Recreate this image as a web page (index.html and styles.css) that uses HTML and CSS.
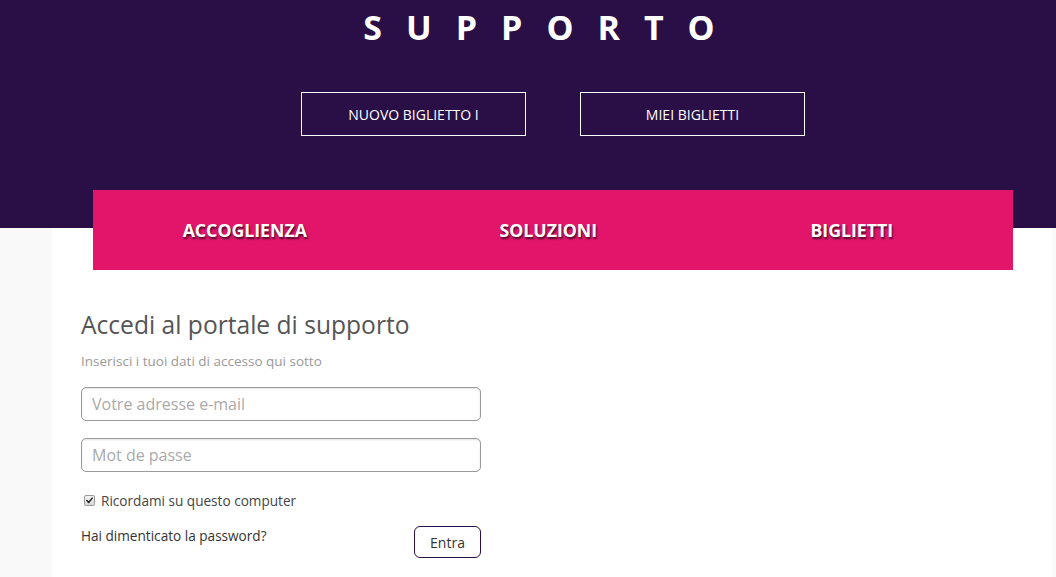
FILE: index.html
```html
<!DOCTYPE html>
<html lang="it">
<head>
<meta charset="utf-8">
<title>Supporto</title>
<link rel="stylesheet" href="styles.css">
</head>
<body>
<header class="hero">
  <h1 class="hero-title">SUPPORTO</h1>
  <div class="hero-actions">
    <a class="hero-btn" href="#">NUOVO BIGLIETTO I</a>
    <a class="hero-btn" href="#">MIEI BIGLIETTI</a>
  </div>
</header>
<main class="page">
  <nav class="tabs">
    <a class="tab" href="#">ACCOGLIENZA</a>
    <a class="tab" href="#">SOLUZIONI</a>
    <a class="tab" href="#">BIGLIETTI</a>
  </nav>
  <form class="login">
    <h2 class="login-title">Accedi al portale di supporto</h2>
    <p class="login-sub">Inserisci i tuoi dati di accesso qui sotto</p>
    <input class="field" type="text" placeholder="Votre adresse e-mail">
    <input class="field" type="password" placeholder="Mot de passe">
    <label class="remember">
      <input class="check" type="checkbox" checked>
      <span class="box"><svg viewBox="0 0 11 11" width="11" height="11"><path d="M2.3 5.6 L4.5 8 L8.8 2.6" fill="none" stroke="#222" stroke-width="1.8" stroke-linecap="round" stroke-linejoin="round"/></svg></span>
      <span>Ricordami su questo computer</span>
    </label>
    <div class="login-foot">
      <a class="forgot" href="#">Hai dimenticato la password?</a>
      <button class="submit" type="button">Entra</button>
    </div>
  </form>
</main>
</body>
</html>
```
FILE: styles.css
```css
* { box-sizing: border-box; }
html, body { margin: 0; padding: 0; }
body {
  background: #f9f9f9;
  font-family: "Open Sans", "Liberation Sans", sans-serif;
  height: 577px;
  overflow: hidden;
}
.hero {
  background: #2a0f47;
  height: 228px;
  padding-top: 4px;
  padding-left: 49px;
  text-align: center;
}
.hero-title {
  margin: 0;
  color: #fff;
  font-size: 34px;
  font-weight: 700;
  letter-spacing: 24px;
  line-height: 46px;
  padding-right: 3px;
}
.hero-actions {
  display: flex;
  justify-content: center;
  gap: 54px;
  margin-top: 42px;
  padding-left: 1px;
}
.hero-btn {
  width: 225px;
  height: 44px;
  border: 1px solid #fff;
  color: #fff;
  text-decoration: none;
  font-size: 14px;
  display: flex;
  align-items: center;
  justify-content: center;
}
.page {
  display: flow-root;
  background: #fff;
  margin-left: 52px;
  width: 1000px;
  height: 349px;
  padding: 0 39px 0 41px;
}
.tabs {
  margin-top: -38px;
  height: 80px;
  background: #e3156a;
  display: grid;
  grid-template-columns: repeat(3, 303.5px);
  align-items: center;
}
.tab {
  text-align: center;
  color: #fff;
  text-decoration: none;
  font-weight: 700;
  font-size: 17.7px;
  text-shadow: 1px 2px 2px #4a0a2a;
}
.login {
  width: 400px;
  margin-left: -12px;
  padding-top: 38px;
}
.login-title {
  margin: 0;
  font-size: 24.6px;
  font-weight: 400;
  color: #555;
  line-height: 34px;
}
.login-sub {
  margin: 10px 0 17px;
  font-size: 13.5px;
  color: #999;
}
.field {
  display: block;
  width: 400px;
  height: 34px;
  border: 1px solid #9a9a9a;
  border-radius: 5px;
  box-shadow: inset 0 1px 2px rgba(0,0,0,0.12);
  padding: 0 10px;
  font-family: inherit;
  font-size: 16px;
  margin-bottom: 17px;
  color: #555;
}
.field::placeholder { color: #aaa; }
.remember {
  display: flex;
  align-items: center;
  font-size: 13.6px;
  color: #444;
  margin-top: 19px;
  padding-left: 3px;
}
.check {
  position: absolute;
  opacity: 0;
  width: 0;
  height: 0;
  margin: 0;
}
.box {
  width: 11px;
  height: 11px;
  border: 1px solid #999;
  border-radius: 2px;
  background: linear-gradient(#f4f4f4, #d8d8d8);
  display: flex;
  align-items: center;
  justify-content: center;
  margin-right: 6px;
}
.box svg { display: block; width: 9px; height: 9px; }
.login-foot {
  display: flex;
  justify-content: space-between;
  align-items: flex-start;
  margin-top: 16px;
}
.forgot {
  font-size: 13.6px;
  color: #333;
  text-decoration: none;
}
.submit {
  width: 67px;
  height: 32px;
  border: 1px solid #2a0f47;
  border-radius: 6px;
  background: #fff;
  color: #333;
  font-family: inherit;
  font-size: 14px;
}
```
